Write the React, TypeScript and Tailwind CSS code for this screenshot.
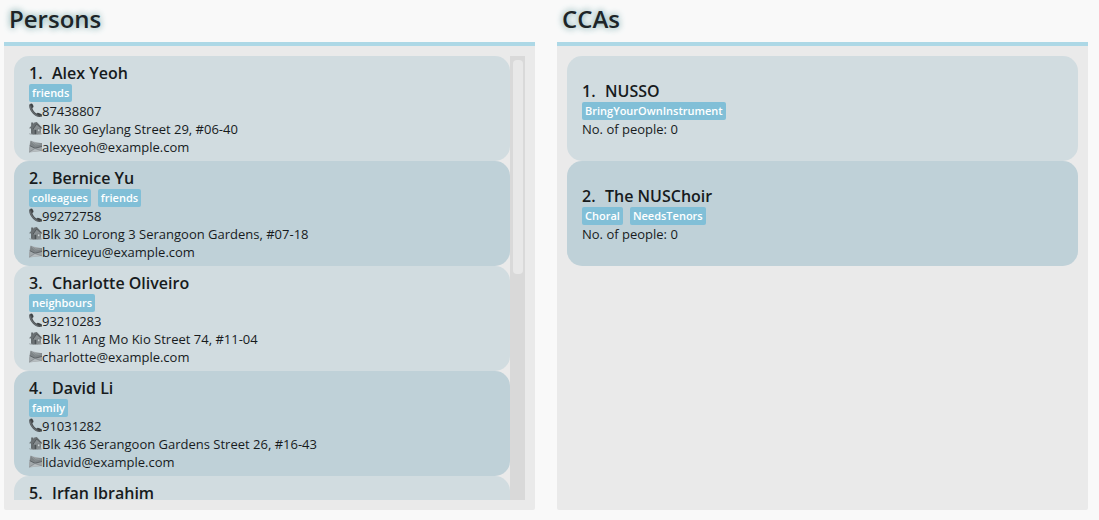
import type { ReactNode } from "react";

type Person = { name: string; tags: string[]; phone: string; address: string; email: string };
type Cca = { name: string; tags: string[]; people: number };

const persons: Person[] = [
  { name: "Alex Yeoh", tags: ["friends"], phone: "87438807", address: "Blk 30 Geylang Street 29, #06-40", email: "alexyeoh@example.com" },
  { name: "Bernice Yu", tags: ["colleagues", "friends"], phone: "99272758", address: "Blk 30 Lorong 3 Serangoon Gardens, #07-18", email: "berniceyu@example.com" },
  { name: "Charlotte Oliveiro", tags: ["neighbours"], phone: "93210283", address: "Blk 11 Ang Mo Kio Street 74, #11-04", email: "charlotte@example.com" },
  { name: "David Li", tags: ["family"], phone: "91031282", address: "Blk 436 Serangoon Gardens Street 26, #16-43", email: "lidavid@example.com" },
  { name: "Irfan Ibrahim", tags: ["classmates"], phone: "92492021", address: "Blk 47 Tampines Street 20, #17-35", email: "irfan@example.com" },
];

const ccas: Cca[] = [
  { name: "NUSSO", tags: ["BringYourOwnInstrument"], people: 0 },
  { name: "The NUSChoir", tags: ["Choral", "NeedsTenors"], people: 0 },
];

function PhoneIcon() {
  return (
    <svg viewBox="0 0 13 14" className="mt-px h-3.5 w-[13px] shrink-0" aria-hidden="true">
      <path d="M.2 2.600C.2 1 1.400 .3 2.800 .4C3.800 .7 4.700 2.700 4.500 4L3.400 5.300C3.900 7.200 5.600 9.400 7.400 10.400L8.600 9.800C10.100 9.900 12.200 10.800 13 11.600V13.400C11.700 14 9.500 14.100 8 13.500C4 12 .2 7.200 .2 2.600Z" fill="#4d5255" />
      <path d="M1.300 3.400C1.600 7 4.800 11.600 8.600 12.800" fill="none" stroke="#777e81" strokeWidth=".8" />
      <path d="M2.400 1.200L3.700 3.800M8.800 10.700L12 11.900" fill="none" stroke="#35393b" strokeWidth="1" />
    </svg>
  );
}

function HouseIcon() {
  return (
    <svg viewBox="0 0 13 14" className="mt-px h-3.5 w-[13px] shrink-0" aria-hidden="true">
      <path d="M2 7L7.500 3L12 7V12.800L4.500 13.500L2 12.500Z" fill="#888e91" />
      <path d="M2 6.800L4.800 5.400V13.500L2 12.500Z" fill="#666c6f" />
      <path d="M2.200 1.600H4.300V4.800L2.200 6Z" fill="#61676a" />
      <path d="M0 7.200L5.400 1.400L7.800 1L13 6.600L12.200 7.600L7.700 3.400L4.300 7.800Z" fill="#6a7073" />
      <path d="M4.200 8L7.600 3L12.500 7.500" fill="none" stroke="#4b5154" strokeWidth=".8" />
      <path d="M5.400 8.800H7.300V13.200H5.400Z" fill="#4b5154" />
      <path d="M8.400 8H10.900V10.700H8.400Z" fill="#ccd2d4" stroke="#656b6e" strokeWidth=".6" />
      <path d="M.3 12.700C2.300 13.600 8.300 13.800 12.800 12.900" fill="none" stroke="#8d9497" strokeWidth=".8" />
    </svg>
  );
}

function MailIcon() {
  return (
    <svg viewBox="0 0 13 14" className="mt-px h-3.5 w-[13px] shrink-0" aria-hidden="true">
      <path d="M1.300 2L13 4.300V12L0 13.500V9Z" fill="#a0a6a9" />
      <path d="M1.800 1.400L6.400 4.800L13 3.900V7.600L6 9.400L.8 6.800Z" fill="#7e8487" />
      <path d="M.9 6.700L6 9.300L13 7.400" fill="none" stroke="#5b6164" strokeWidth=".9" />
      <path d="M2.300 2.600L6.500 6L12.500 5" fill="none" stroke="#969da0" strokeWidth=".8" />
      <path d="M.2 13.100L5.800 9.400L13 11.900" fill="none" stroke="#868d90" strokeWidth=".7" />
      <path d="M1.500 12.900L6 10.200L11.300 12Z" fill="#b8bec1" />
    </svg>
  );
}

function Detail({ icon, children }: { icon?: ReactNode; children: ReactNode }) {
  return (
    <div className="flex h-[18px] items-start text-[13px] leading-[18px] whitespace-nowrap">
      {icon}
      <span>{children}</span>
    </div>
  );
}

function Card({ index, name, tags, className, children }: { index: number; name: string; tags: string[]; className: string; children: ReactNode }) {
  return (
    <li className={`rounded-[15px] px-[15px] odd:bg-[#d1dce0] even:bg-[#bfd1d8] ${className}`}>
      <h2 className="flex text-base leading-[22px] font-semibold">
        <span className="w-[23px] shrink-0">{index}.</span>
        <span>{name}</span>
      </h2>
      <ul className="flex gap-[7px]">
        {tags.map((tag) => (
          <li key={tag} className="h-[18px] rounded-xs bg-[#81bfd7] px-[3px] text-[11px] leading-[18px] font-semibold text-white">
            {tag}
          </li>
        ))}
      </ul>
      {children}
    </li>
  );
}

function Panel({ title, children }: { title: string; children: ReactNode }) {
  return (
    <section className="flex min-h-0 min-w-0 flex-1 flex-col">
      <h1 className="h-[42px] shrink-0 px-[5px] text-2xl leading-[38px] font-semibold text-[#1d2528] [text-shadow:0_0_6px_#7fabae,0_0_8px_#c5dadc]">
        {title}
      </h1>
      <div className="flex min-h-0 flex-1 rounded-b-xs border-t-4 border-[#add8e6] bg-[#eaeaea] p-2.5">{children}</div>
    </section>
  );
}

export default function App() {
  return (
    <main className="flex h-screen gap-[22px] bg-[#f9f9f9] pr-[11px] pb-2.5 pl-1 font-['Open_Sans',sans-serif] text-[#171b1d]">
      <Panel title="Persons">
        <ul className="min-w-0 flex-1 overflow-y-auto [scrollbar-width:none]">
          {persons.map((p, i) => (
            <Card key={p.name} index={i + 1} name={p.name} tags={p.tags} className="pt-1.5 pb-[5px]">
              <Detail icon={<PhoneIcon />}>{p.phone}</Detail>
              <Detail icon={<HouseIcon />}>{p.address}</Detail>
              <Detail icon={<MailIcon />}>{p.email}</Detail>
            </Card>
          ))}
        </ul>
        <div className="w-[15px] shrink-0 bg-[#d9d9d9] py-1 pr-0.5 pl-[3px]" aria-hidden="true">
          <div className="h-[49%] rounded bg-[#e8e8e8]" />
        </div>
      </Panel>
      <Panel title="CCAs">
        <ul className="min-w-0 flex-1 overflow-y-auto [scrollbar-width:none]">
          {ccas.map((c, i) => (
            <Card key={c.name} index={i + 1} name={c.name} tags={c.tags} className="pt-6 pb-[23px]">
              <Detail>No. of people: {c.people}</Detail>
            </Card>
          ))}
        </ul>
      </Panel>
    </main>
  );
}
